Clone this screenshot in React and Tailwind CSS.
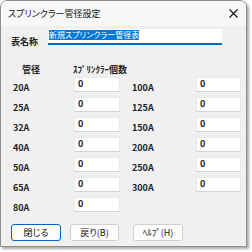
import React from "react";

const leftRows = ["20A", "25A", "32A", "40A", "50A", "65A", "80A"];
const rightRows = ["100A", "125A", "150A", "200A", "250A", "300A"];

function Field({ width }) {
  return (
    <div
      className={`${width} h-[15px] bg-white border border-[#e8e8e8] border-b-[#d2d2d2] pl-[3px] text-[9px] leading-[11px] font-semibold text-[#1a1a1a]`}
    >
      0
    </div>
  );
}

function Row({ label, labelWidth, fieldWidth }) {
  return (
    <div className="flex h-[15px]">
      <div className={`${labelWidth} pt-[5px] text-[9px] leading-[12px] font-semibold text-[#222]`}>
        {label}
      </div>
      <Field width={fieldWidth} />
    </div>
  );
}

export default function App() {
  return (
    <div className="w-[252px] h-[252px] bg-white font-['Noto_Sans_CJK_JP','Noto_Sans',sans-serif] [font-feature-settings:'palt'] text-[#1a1a1a]">
      <div className="w-[247px] h-[247px] flex flex-col border border-[#8e8e8e] rounded-t-[7px] bg-[#f0f0f0] shadow-[2px_2px_3px_rgba(0,0,0,0.35)] overflow-hidden">
        {/* title bar */}
        <div className="h-[25px] flex items-center justify-between bg-[#f7f7f7] pl-[7px] pr-[7px]">
          <span className="text-[9px] leading-[12px] text-[#111]">スプリンクラー管径設定</span>
          <svg width="9" height="9" viewBox="0 0 9 9" className="mr-[1px]">
            <path d="M0.5 0.5L8.5 8.5M8.5 0.5L0.5 8.5" stroke="#111" strokeWidth="1.1" />
          </svg>
        </div>

        <div className="flex flex-col pt-[3px] pl-[10px]">
          {/* name row */}
          <div className="flex h-[16px]">
            <div className="w-[37px] pt-[7px] text-[9px] leading-[12px] font-semibold text-[#222]">表名称</div>
            <div className="w-[174px] h-[16px] flex items-start bg-white border-b-2 border-[#0067c0] pl-[1px] pt-[1px]">
              <span className="block bg-[#0078d7] text-white text-[8px] leading-[10px]">新規スプリンクラー管径表</span>
            </div>
          </div>

          {/* headers */}
          <div className="flex mt-[19px] h-[12px] text-[9px] leading-[12px] font-semibold text-[#222]">
            <span className="w-[62px] pl-[11px]">管径</span>
            <span className="[font-feature-settings:normal]">ｽﾌﾟﾘﾝｸﾗｰ個数</span>
          </div>

          {/* table */}
          <div className="flex mt-[1px]">
            <div className="flex flex-col gap-[5px] pl-[2px]">
              {leftRows.map((r) => (
                <Row key={r} label={r} labelWidth="w-[61px]" fieldWidth="w-[46px]" />
              ))}
            </div>
            <div className="flex flex-col gap-[5px] pl-[12px]">
              {rightRows.map((r) => (
                <Row key={r} label={r} labelWidth="w-[64px]" fieldWidth="w-[45px]" />
              ))}
            </div>
          </div>

          {/* buttons */}
          <div className="flex mt-[12px] text-[9px] leading-[12px] text-[#111]">
            <button className="w-[50px] h-[17px] bg-[#fdfdfd] border border-[#0067c0] rounded-[3px] flex items-center justify-center">
              閉じる
            </button>
            <button className="ml-[9px] w-[49px] h-[17px] bg-[#fdfdfd] border border-[#d0d0d0] rounded-[3px] flex items-center justify-center">
              戻り(B)
            </button>
            <button className="ml-[14px] w-[50px] h-[17px] bg-[#fdfdfd] border border-[#d0d0d0] rounded-[3px] flex items-center justify-center">
              ﾍﾙﾌﾟ(H)
            </button>
          </div>
        </div>
      </div>
    </div>
  );
}
